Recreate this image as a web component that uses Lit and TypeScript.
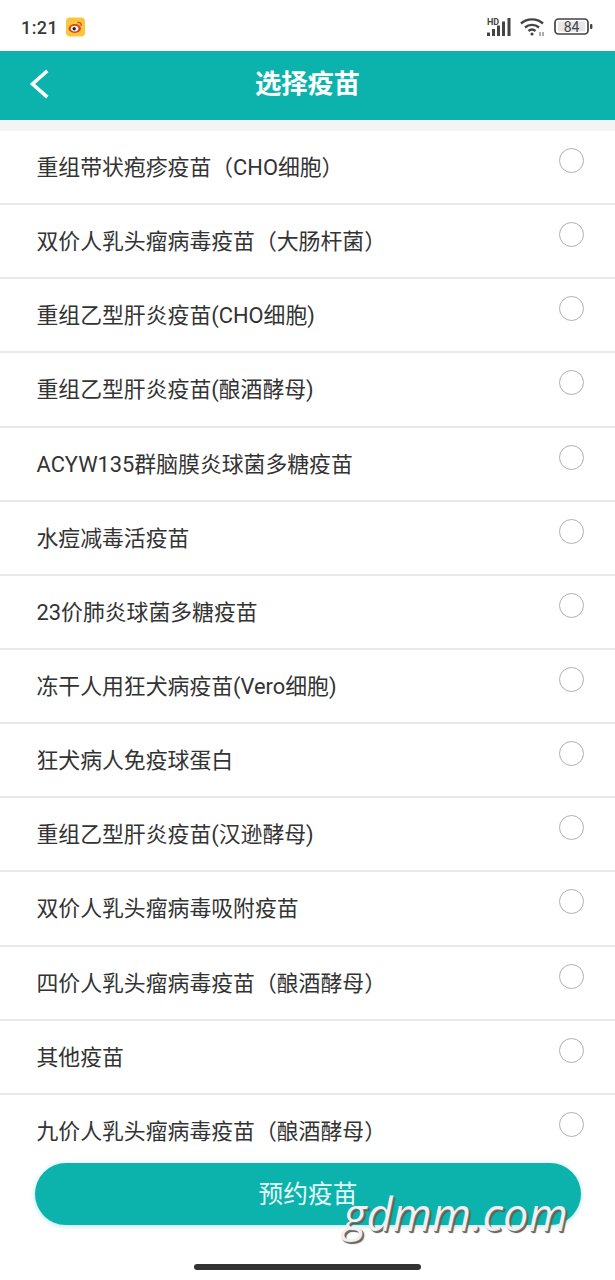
import { LitElement, html, css, svg } from "lit";
import { customElement } from "lit/decorators.js";

const ITEMS = [
  "重组带状疱疹疫苗（CHO细胞）",
  "双价人乳头瘤病毒疫苗（大肠杆菌）",
  "重组乙型肝炎疫苗(CHO细胞)",
  "重组乙型肝炎疫苗(酿酒酵母)",
  "ACYW135群脑膜炎球菌多糖疫苗",
  "水痘减毒活疫苗",
  "23价肺炎球菌多糖疫苗",
  "冻干人用狂犬病疫苗(Vero细胞)",
  "狂犬病人免疫球蛋白",
  "重组乙型肝炎疫苗(汉逊酵母)",
  "双价人乳头瘤病毒吸附疫苗",
  "四价人乳头瘤病毒疫苗（酿酒酵母）",
  "其他疫苗",
  "九价人乳头瘤病毒疫苗（酿酒酵母）",
];

@customElement("app-root")
export class AppRoot extends LitElement {
  static styles = css`
    :host {
      display: block;
      position: relative;
      width: 615px;
      height: 1280px;
      overflow: hidden;
      background: #fff;
      font-family: Roboto, "Noto Sans CJK SC", sans-serif;
      color: #333;
    }
    .status {
      height: 51px;
      display: flex;
      align-items: center;
      padding: 3px 21px 0 21px;
      box-sizing: border-box;
    }
    .time {
      font-size: 18px;
      font-weight: 500;
      color: #3a3a3a;
      letter-spacing: 0.4px;
    }
    .weibo { margin-left: 8px; }
    .spacer { flex: 1; }
    .sig { margin-right: 9px; }
    .wifi { margin-right: 8px; }
    .header {
      height: 69px;
      box-sizing: border-box;
      padding-bottom: 9px;
      background: #0bb3ac;
      display: flex;
      align-items: center;
      justify-content: center;
      position: relative;
      color: #fff;
      font-size: 26.3px;
      font-weight: 700;
    }
    .back {
      position: absolute;
      left: 28px;
      top: 17px;
    }
    .strip {
      height: 11px;
      background: #f4f4f4;
    }
    .row {
      height: 74.15px;
      box-sizing: border-box;
      border-bottom: 2px solid #e9e9e9;
      padding: 0 31px 0 36.5px;
      display: flex;
      justify-content: space-between;
      font-size: 21.85px;
      color: #333;
    }
    .row:last-child {
      border-bottom: none;
    }
    .label {
      line-height: 74px;
      white-space: nowrap;
    }
    .radio {
      width: 23px;
      height: 23px;
      margin-top: 17px;
      border: 1.3px solid #b0b0b0;
      border-radius: 50%;
      box-sizing: content-box;
      flex: none;
    }
    .btn {
      position: absolute;
      left: 35px;
      top: 1163px;
      width: 546px;
      height: 62px;
      box-sizing: border-box;
      padding-bottom: 4px;
      border-radius: 31px;
      background: #0bb3ac;
      box-shadow: 0 1px 5px rgba(11, 179, 172, 0.35);
      color: #e4f8f6;
      font-size: 24.7px;
      display: flex;
      align-items: center;
      justify-content: center;
    }
    .home {
      position: absolute;
      left: 194px;
      top: 1264px;
      width: 227px;
      height: 6px;
      border-radius: 3px;
      background: #333;
    }
    .mark {
      position: absolute;
      left: 343px;
      top: 1185px;
      font-family: "Open Sans", sans-serif;
      font-style: italic;
      font-size: 45px;
      line-height: 58px;
      color: #f0f0f0;
      letter-spacing: 0.1px;
      text-shadow: 1px 1px 0 #777, 2px 2px 1px #555;
    }
  `;

  private sig() {
    return svg`<svg class="sig" width="24" height="20" viewBox="0 0 24 20">
      <text x="0" y="7.5" font-size="9" font-weight="700" font-family="Roboto, sans-serif" fill="#444">HD</text>
      <g fill="#444">
        <rect x="0" y="15.5" width="3" height="3.5"/>
        <rect x="5" y="12" width="3" height="7"/>
        <rect x="10" y="8.5" width="3" height="10.5"/>
        <rect x="15" y="4.5" width="3" height="14.5"/>
        <rect x="20.5" y="1" width="3" height="18"/>
      </g>
    </svg>`;
  }

  private wifi() {
    return svg`<svg class="wifi" width="26" height="20" viewBox="0 0 26 20" fill="none" stroke="#444" stroke-width="2.4">
      <path d="M1 6.5C7 1 17 1 23 6.5"/>
      <path d="M5 10.5C9 7 15 7 19 10.5"/>
      <path d="M8.5 14C10.5 12.4 13.5 12.4 15.5 14"/>
      <circle cx="12" cy="17" r="1.6" fill="#444" stroke="none"/>
      <path d="M20 15v4M23 15v4" stroke-width="1.2" stroke="#777"/>
    </svg>`;
  }

  private batt() {
    return svg`<svg width="40" height="18" viewBox="0 0 40 18">
      <rect x="1" y="1" width="33" height="15" rx="3.5" fill="#fff" stroke="#444" stroke-width="1.7"/>
      <rect x="4" y="3.5" width="27" height="10" fill="#e6e6e6"/>
      <rect x="36" y="6" width="2.4" height="5" rx="1" fill="#444"/>
      <text x="17.5" y="13.8" text-anchor="middle" font-size="14" font-family="Roboto, sans-serif" fill="#444">84</text>
    </svg>`;
  }

  private weibo() {
    return svg`<svg class="weibo" width="19" height="20" viewBox="0 0 19 20">
      <rect x="0" y="0.5" width="19" height="19" rx="4" fill="#fbc53c"/>
      <ellipse cx="8.8" cy="11.5" rx="6.2" ry="4.4" fill="#d8431f"/>
      <ellipse cx="8.6" cy="11.6" rx="3.8" ry="2.8" fill="#fff"/>
      <circle cx="8.2" cy="11.7" r="1.7" fill="#222"/>
      <path d="M11.5 5.5C14 5 15.6 6.4 15.2 9" stroke="#d8431f" stroke-width="1.3" fill="none"/>
    </svg>`;
  }

  render() {
    return html`
      <div class="status">
        <span class="time">1:21</span>
        ${this.weibo()}
        <span class="spacer"></span>
        ${this.sig()} ${this.wifi()} ${this.batt()}
      </div>
      <div class="header">
        <svg class="back" width="22" height="32" viewBox="0 0 22 32" fill="none" stroke="#fff" stroke-width="3.6" stroke-linecap="square">
          <path d="M18 4L4.5 16L18 28"/>
        </svg>
        选择疫苗
      </div>
      <div class="strip"></div>
      <div class="list">
        ${ITEMS.map(
          (t) => html`<div class="row"><span class="label">${t}</span><span class="radio"></span></div>`
        )}
      </div>
      <div class="btn">预约疫苗</div>
      <div class="mark">gdmm.com</div>
      <div class="home"></div>
    `;
  }
}
